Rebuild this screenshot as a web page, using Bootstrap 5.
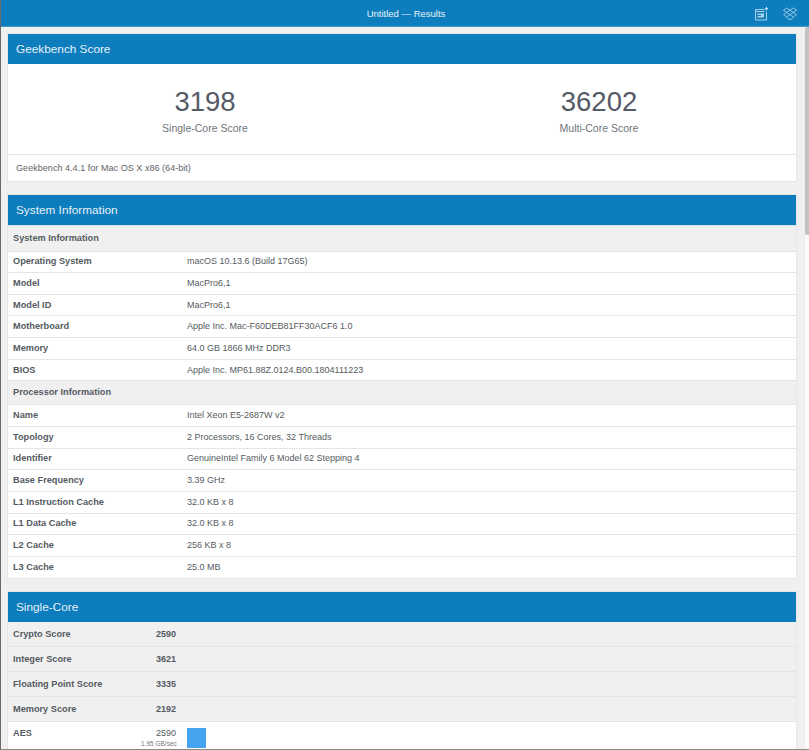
<!DOCTYPE html>
<html lang="en">
<head>
    <meta charset="UTF-8" />
    <title>Untitled — Results</title>
    <link rel="stylesheet" href="https://cdn.jsdelivr.net/npm/bootstrap@5.3.0/dist/css/bootstrap.min.css" />
    <style>
        html, body { height: 100%; overflow: hidden; }
        body { font-family: "Liberation Sans", Arial, sans-serif; color: #555b62; background: #f0f0f0; font-size: 9px; }
        .app-window { height: 750px; width: 809px; border-left: 1px solid #6a6a6a; border-bottom: 1px solid #8a8a8a; position: relative; overflow: hidden; }
        .title-strip { height: 27px; background: #0d7dbd; border-bottom: 1px solid #3f97cb; color: #e6f1f8; font-size: 9.5px; flex-shrink: 0; }
        .title-label { left: 2px; right: 0; top: 8px; line-height: 12px; text-align: center; }
        .title-icons { gap: 15px; padding: 7px 12px 0 0; }
        .page-scroll { padding: 7px 13px 0 7px; }
        .gb-panel { background: #fff; margin-bottom: 14px; box-shadow: 0 0 0 1px #e6e6e6; }
        .gb-head { height: 30px; background: #0d7dbd; color: #e6f1f8; font-size: 11.8px; line-height: 30px; padding-left: 8px; }
        .head-rule { height: 31px; border-bottom: 1px solid #d5dfe6; }
        .score-block { height: 91px; border-bottom: 1px solid #e5e5e5; }
        .score-num { font-size: 27.5px; line-height: 30px; color: #555b66; margin-top: 23px; }
        .score-cap { font-size: 10.5px; line-height: 14px; color: #6f7479; margin-top: 4px; }
        .gb-foot { height: 26px; line-height: 27px; padding-left: 8px; font-size: 9.1px; color: #5f6469; }
        .gb-table { margin: 0; table-layout: fixed; color: #555b62; }
        .gb-table td { padding: 0 0 0 5px; height: 21.65px; font-size: 9px; line-height: 11px; border-top: 0; border-bottom: 1px solid #e5e5e5; vertical-align: middle; box-shadow: none; }
        .gb-table tr:last-child td { border-bottom: 0; }
        .gb-table .lbl-col { font-weight: 700; font-size: 9.2px; }
        .gb-table .sect-row td { height: 24px; background: #f0f0f0; font-weight: 700; font-size: 9.2px; }
        .gb-table .sect-row:first-child td { height: 25px; }
        .gb-table .sum-row td { height: 25px; background: #f0f0f0; font-weight: 700; }
        .gb-table .num-col { padding: 0 11px 0 0; text-align: right; font-weight: 700; }
        .gb-table .bench-row td { height: 40px; background: #fff; vertical-align: top; padding-top: 6px; }
        .gb-table .bench-row .num-col { font-weight: 400; }
        .col-lbl-wide { width: 174px; }
        .col-lbl { width: 133px; }
        .col-num { width: 46px; }
        .rate-text { font-size: 6.5px; line-height: 8px; color: #777; white-space: nowrap; margin-top: 1px; font-weight: 400; }
        .rate-bar { width: 19px; height: 20px; background: #46a3f0; }
        .gb-table .bar-cell { padding-left: 0; }
        .scroll-track { right: 0; top: 27px; bottom: 0; width: 5px; background: #fafafa; border-left: 1px solid #eeeeee; }
        .scroll-thumb { right: 0; top: 27px; height: 208px; width: 4px; background: #c2c2c2; border-radius: 2px 0 0 2px; }
    </style>
</head>
<body>

<div class="app-window d-flex flex-column">
    <div class="title-strip position-relative d-flex justify-content-end">
        <div class="title-label position-absolute">Untitled — Results</div>
        <div class="title-icons d-flex align-items-start">
            <svg width="14" height="14" viewBox="0 0 14 14" fill="none" stroke="#a9d2ea" stroke-width="1">
                <path d="M10.5 2.5H1.5V13H12.5V5"/>
                <path d="M1.5 4.5H10.5"/>
                <path d="M3.5 6.5H10V10.5H3.5V9H7V8H3.5Z" fill="#a9d2ea" stroke="none"/>
                <path d="M12.5 0V3.5M10.8 1.7H14.2" stroke="#d5e9f5"/>
            </svg>
            <svg width="14" height="14" viewBox="0 0 15 15" fill="none" stroke="#a9d2ea" stroke-width="0.9">
                <path d="M4 1L7.5 3.4L4 5.8L0.5 3.4Z"/>
                <path d="M11 1L14.5 3.4L11 5.8L7.5 3.4Z"/>
                <path d="M4 5.8L7.5 8.2L4 10.6L0.5 8.2Z"/>
                <path d="M11 5.8L14.5 8.2L11 10.6L7.5 8.2Z"/>
                <path d="M3.8 11.4L7.5 13.8L11.2 11.4"/>
            </svg>
        </div>
    </div>

    <div class="page-scroll flex-grow-1">
        <div class="gb-panel">
            <div class="gb-head">Geekbench Score</div>
            <div class="score-block row g-0 text-center">
                <div class="col-6">
                    <div class="score-num">3198</div>
                    <div class="score-cap">Single-Core Score</div>
                </div>
                <div class="col-6">
                    <div class="score-num">36202</div>
                    <div class="score-cap">Multi-Core Score</div>
                </div>
            </div>
            <div class="gb-foot">Geekbench 4.4.1 for Mac OS X x86 (64-bit)</div>
        </div>

        <div class="gb-panel">
            <div class="gb-head head-rule">System Information</div>
            <table class="table gb-table">
                <colgroup><col class="col-lbl-wide"><col></colgroup>
                <tbody id="sysBody"></tbody>
            </table>
        </div>

        <div class="gb-panel">
            <div class="gb-head">Single-Core</div>
            <table class="table gb-table">
                <colgroup><col class="col-lbl"><col class="col-num"><col></colgroup>
                <tbody id="coreBody"></tbody>
            </table>
        </div>
    </div>

    <div class="scroll-track position-absolute"></div>
    <div class="scroll-thumb position-absolute"></div>
</div>

<script src="https://cdn.jsdelivr.net/npm/bootstrap@5.3.0/dist/js/bootstrap.bundle.min.js"></script>
<script>
    const sysRows = [
        ['System Information'],
        ['Operating System', 'macOS 10.13.6 (Build 17G65)'],
        ['Model', 'MacPro6,1'],
        ['Model ID', 'MacPro6,1'],
        ['Motherboard', 'Apple Inc. Mac-F60DEB81FF30ACF6 1.0'],
        ['Memory', '64.0 GB 1866 MHz DDR3'],
        ['BIOS', 'Apple Inc. MP61.88Z.0124.B00.1804111223'],
        ['Processor Information'],
        ['Name', 'Intel Xeon E5-2687W v2'],
        ['Topology', '2 Processors, 16 Cores, 32 Threads'],
        ['Identifier', 'GenuineIntel Family 6 Model 62 Stepping 4'],
        ['Base Frequency', '3.39 GHz'],
        ['L1 Instruction Cache', '32.0 KB x 8'],
        ['L1 Data Cache', '32.0 KB x 8'],
        ['L2 Cache', '256 KB x 8'],
        ['L3 Cache', '25.0 MB']
    ];
    const coreRows = [
        ['Crypto Score', '2590'],
        ['Integer Score', '3621'],
        ['Floating Point Score', '3335'],
        ['Memory Score', '2192']
    ];

    const sysBody = document.getElementById('sysBody');
    sysRows.forEach(row => {
        const tr = document.createElement('tr');
        if (row.length === 1) {
            tr.className = 'sect-row';
            tr.innerHTML = `<td colspan="2">${row[0]}</td>`;
        } else {
            tr.innerHTML = `<td class="lbl-col">${row[0]}</td><td>${row[1]}</td>`;
        }
        sysBody.appendChild(tr);
    });

    const coreBody = document.getElementById('coreBody');
    coreRows.forEach(row => {
        const tr = document.createElement('tr');
        tr.className = 'sum-row';
        tr.innerHTML = `<td class="lbl-col">${row[0]}</td><td class="num-col">${row[1]}</td><td></td>`;
        coreBody.appendChild(tr);
    });
    const aes = document.createElement('tr');
    aes.className = 'bench-row';
    aes.innerHTML = `<td class="lbl-col">AES</td>
        <td class="num-col">2590<div class="rate-text">1.95 GB/sec</div></td>
        <td class="bar-cell"><div class="rate-bar"></div></td>`;
    coreBody.appendChild(aes);
</script>
</body>
</html>
